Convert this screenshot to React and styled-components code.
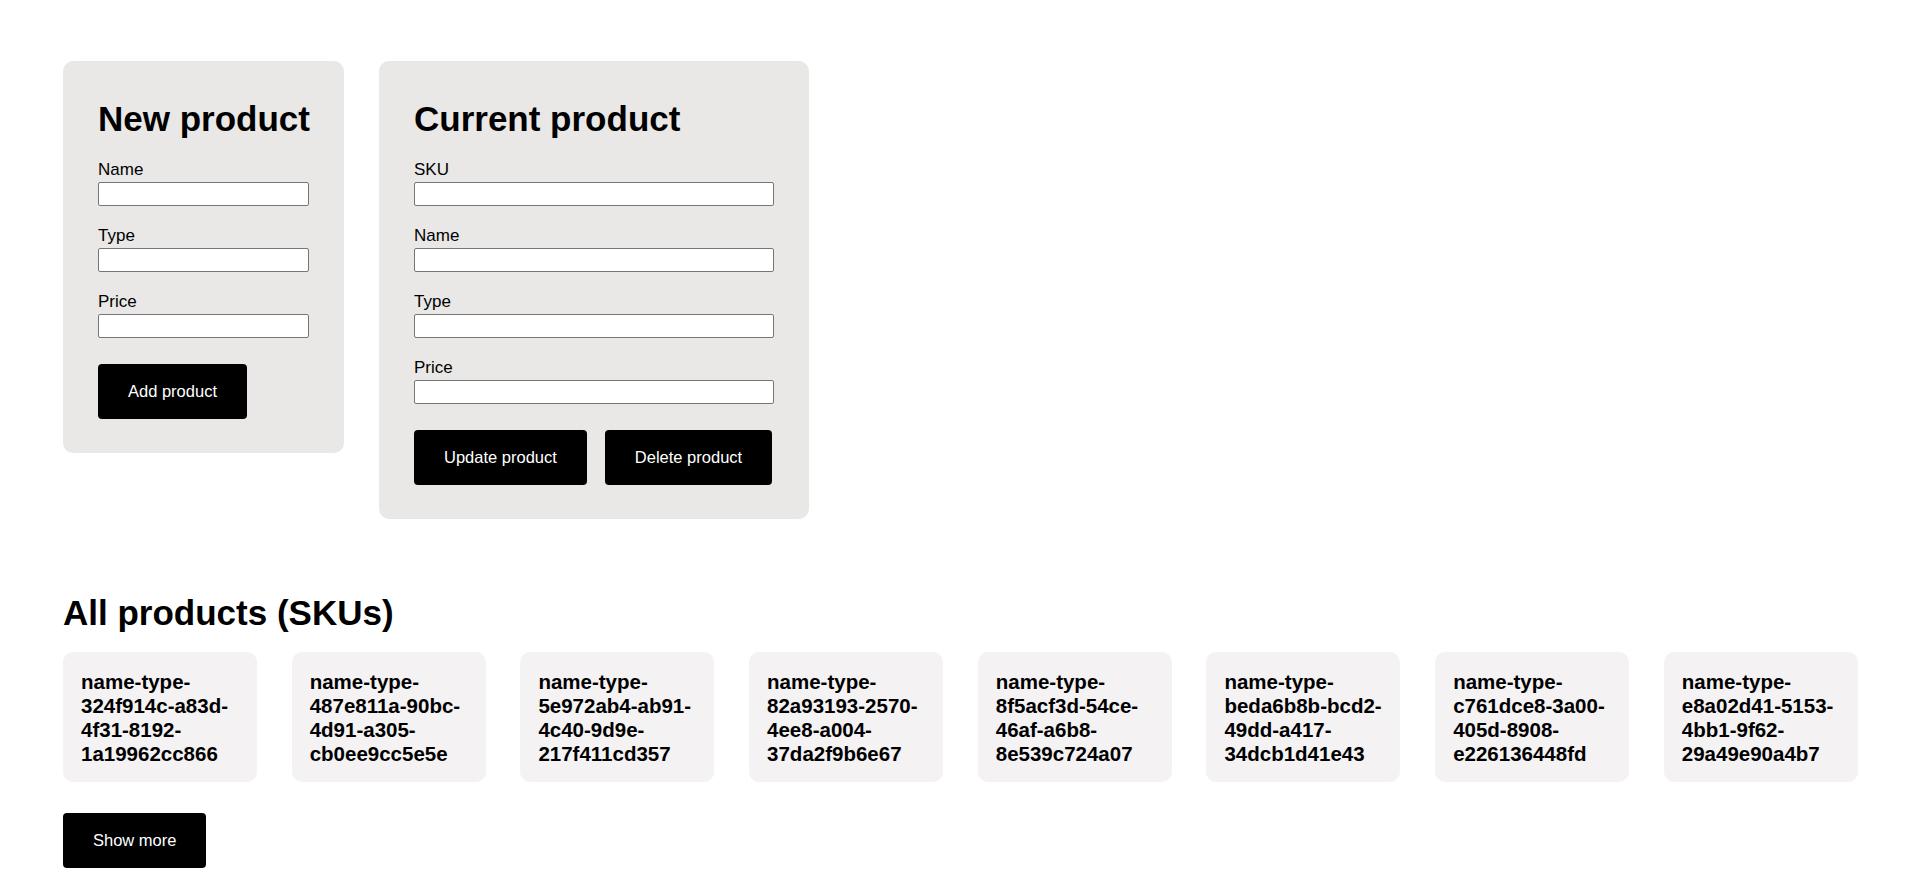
import React, { useState } from 'react';
import styled, { createGlobalStyle } from 'styled-components';

const GlobalStyle = createGlobalStyle`
  * {
    box-sizing: border-box;
  }

  body {
    margin: 0;
    background: #fff;
    color: #000;
    font-family: 'Liberation Sans', Arial, sans-serif;
  }
`;

const skus = [
  'name-type-324f914c-a83d-4f31-8192-1a19962cc866',
  'name-type-487e811a-90bc-4d91-a305-cb0ee9cc5e5e',
  'name-type-5e972ab4-ab91-4c40-9d9e-217f411cd357',
  'name-type-82a93193-2570-4ee8-a004-37da2f9b6e67',
  'name-type-8f5acf3d-54ce-46af-a6b8-8e539c724a07',
  'name-type-beda6b8b-bcd2-49dd-a417-34dcb1d41e43',
  'name-type-c761dce8-3a00-405d-8908-e226136448fd',
  'name-type-e8a02d41-5153-4bb1-9f62-29a49e90a4b7',
];

const Field = ({ label, value, onChange }) => (
  <FieldWrap>
    <Label>{label}</Label>
    <Input type="text" value={value} onChange={(e) => onChange(e.target.value)} />
  </FieldWrap>
);

export default function App() {
  const [newProduct, setNewProduct] = useState({ name: '', type: '', price: '' });
  const [current, setCurrent] = useState({ sku: '', name: '', type: '', price: '' });

  return (
    <Page>
      <GlobalStyle />
      <FormRow>
        <FormCard $width={281}>
          <CardTitle>New product</CardTitle>
          <Field label="Name" value={newProduct.name} onChange={(v) => setNewProduct({ ...newProduct, name: v })} />
          <Field label="Type" value={newProduct.type} onChange={(v) => setNewProduct({ ...newProduct, type: v })} />
          <Field label="Price" value={newProduct.price} onChange={(v) => setNewProduct({ ...newProduct, price: v })} />
          <Actions>
            <Button>Add product</Button>
          </Actions>
        </FormCard>

        <FormCard $width={430}>
          <CardTitle>Current product</CardTitle>
          <Field label="SKU" value={current.sku} onChange={(v) => setCurrent({ ...current, sku: v })} />
          <Field label="Name" value={current.name} onChange={(v) => setCurrent({ ...current, name: v })} />
          <Field label="Type" value={current.type} onChange={(v) => setCurrent({ ...current, type: v })} />
          <Field label="Price" value={current.price} onChange={(v) => setCurrent({ ...current, price: v })} />
          <Actions>
            <Button>Update product</Button>
            <Button>Delete product</Button>
          </Actions>
        </FormCard>
      </FormRow>

      <Section>
        <SectionTitle>All products (SKUs)</SectionTitle>
        <SkuGrid>
          {skus.map((sku) => (
            <SkuCard key={sku}>{sku}</SkuCard>
          ))}
        </SkuGrid>
        <Button>Show more</Button>
      </Section>
    </Page>
  );
}

const Page = styled.div`
  padding: 61px 0 28px 63px;
`;

const FormRow = styled.div`
  display: flex;
  align-items: flex-start;
  gap: 35px;
`;

const FormCard = styled.div`
  width: ${(p) => p.$width}px;
  padding: 38px 35px 34px;
  background: #e9e8e6;
  border-radius: 10px;
  display: flex;
  flex-direction: column;
`;

const CardTitle = styled.h2`
  margin: 0 0 21px;
  font-size: 35px;
  line-height: 40px;
  font-weight: 700;
  white-space: nowrap;
`;

const FieldWrap = styled.div`
  display: flex;
  flex-direction: column;
  margin-bottom: 20px;
`;

const Label = styled.label`
  font-size: 17px;
  line-height: 20px;
  margin-bottom: 2px;
`;

const Input = styled.input`
  width: 100%;
  height: 24px;
  margin: 0;
  padding: 1px 3px;
  border: 1px solid #767676;
  border-radius: 2px;
  background: #fff;
  font-family: inherit;
  font-size: 15px;
`;

const Actions = styled.div`
  display: flex;
  gap: 18px;
  margin-top: 6px;
`;

const Button = styled.button`
  height: 55px;
  padding: 0 30px;
  border: none;
  border-radius: 4px;
  background: #000;
  color: #fff;
  font-family: 'Liberation Sans', Arial, sans-serif;
  font-size: 16.5px;
  cursor: pointer;
`;

const Section = styled.section`
  margin-top: 74px;
`;

const SectionTitle = styled.h2`
  margin: 0 0 19px;
  font-size: 35px;
  line-height: 40px;
  font-weight: 700;
`;

const SkuGrid = styled.div`
  display: grid;
  grid-template-columns: repeat(8, 194px);
  column-gap: 34.7px;
  margin-bottom: 31px;
`;

const SkuCard = styled.div`
  height: 130px;
  padding: 18px 18px 16px;
  background: #f4f2f3;
  border-radius: 10px;
  font-size: 20.5px;
  line-height: 24px;
  font-weight: 700;
  overflow-wrap: break-word;
`;
